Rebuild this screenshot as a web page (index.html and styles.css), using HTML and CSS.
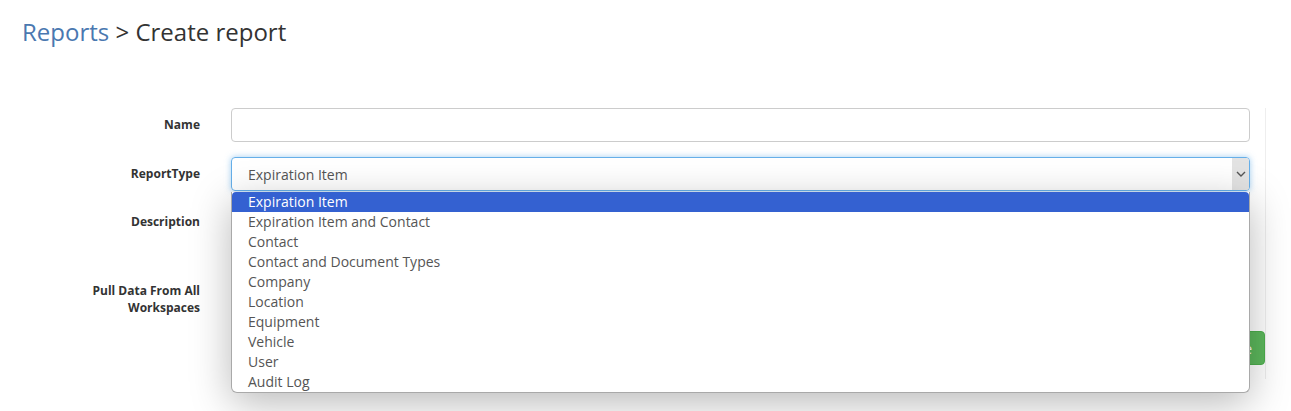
FILE: index.html
```html
<!DOCTYPE html>
<html lang="en">
<head>
    <meta charset="UTF-8">
    <meta name="viewport" content="width=device-width, initial-scale=1.0">
    <title>Create report</title>
    <link rel="stylesheet" href="styles.css">
</head>
<body>
    <h1 class="page-title"><a href="#" class="crumb">Reports</a> &gt; Create report</h1>

    <div class="form-wrap">
        <div class="form-row">
            <label class="control-label" for="name">Name</label>
            <input type="text" id="name" class="form-control">
        </div>

        <div class="form-row">
            <label class="control-label">ReportType</label>
            <div class="select-wrap">
                <div class="fake-select">
                    <span>Expiration Item</span>
                    <span class="arrow">
                        <svg width="10" height="6" viewBox="0 0 10 6"><path d="M1 1l4 4 4-4" fill="none" stroke="#555" stroke-width="1.4"/></svg>
                    </span>
                </div>
                <ul class="options">
                    <li class="selected">Expiration Item</li>
                    <li>Expiration Item and Contact</li>
                    <li>Contact</li>
                    <li>Contact and Document Types</li>
                    <li>Company</li>
                    <li>Location</li>
                    <li>Equipment</li>
                    <li>Vehicle</li>
                    <li>User</li>
                    <li>Audit Log</li>
                </ul>
            </div>
        </div>

        <div class="form-row">
            <label class="control-label desc-label" for="desc">Description</label>
            <textarea id="desc" class="form-control area"></textarea>
        </div>

        <div class="form-row">
            <label class="control-label">Pull Data From All<br>Workspaces</label>
            <div class="check-cell"><input type="checkbox" class="check"></div>
        </div>

        <div class="actions">
            <button class="btn-save">Save</button>
        </div>
    </div>
</body>
</html>
```

FILE: styles.css
```css
html, body {
    min-height: 411px;
}
body {
    margin: 0;
    font-family: 'Open Sans', sans-serif;
    color: #333;
    background-color: #fff;
}
.page-title {
    font-size: 24px;
    font-weight: normal;
    line-height: 33px;
    margin: 0;
    padding: 15px 0 0 22px;
}
.crumb {
    color: #4a78b0;
    text-decoration: none;
}
.form-wrap {
    width: 1265px;
    margin-top: 60px;
    border-right: 1px solid #eee;
    padding-bottom: 14px;
}
.form-row {
    display: grid;
    grid-template-columns: 200px 1fr;
    column-gap: 31px;
    margin: 0 15px 15px 0;
}
.control-label {
    font-size: 12px;
    font-weight: bold;
    line-height: 17px;
    text-align: right;
    padding-top: 8px;
}
.desc-label {
    padding-top: 7px;
}
.form-control {
    height: 34px;
    box-sizing: border-box;
    border: 1px solid #ccc;
    border-radius: 4px;
    font-family: 'Open Sans', sans-serif;
    font-size: 14px;
    margin: 0;
}
.area {
    height: 53px;
    resize: none;
}
.select-wrap {
    position: relative;
}
.fake-select {
    height: 34px;
    box-sizing: border-box;
    border: 1px solid #66afe9;
    border-radius: 4px;
    box-shadow: 0 0 6px rgba(102, 175, 233, 0.6);
    display: flex;
    align-items: center;
    justify-content: space-between;
    padding-left: 16px;
    font-size: 14px;
    color: #555;
    overflow: hidden;
}
.arrow {
    width: 17px;
    height: 100%;
    background-color: #e3e3e3;
    display: flex;
    align-items: center;
    justify-content: center;
}
.options {
    position: absolute;
    top: 35px;
    left: 0;
    right: 0;
    margin: 0;
    padding: 0;
    list-style: none;
    background-color: #fff;
    border: 1px solid #a9a9a9;
    border-top: none;
    border-radius: 0 0 6px 6px;
    box-shadow: 0 10px 40px rgba(0, 0, 0, 0.28);
    z-index: 10;
}
.options li {
    font-size: 14px;
    line-height: 20px;
    color: #555;
    padding-left: 16px;
}
.options li.selected {
    background-color: #3461d1;
    color: #fff;
    border-radius: 4px 4px 0 0;
}
.check-cell {
    padding-top: 12px;
}
.check {
    margin: 0;
    width: 13px;
    height: 13px;
}
.actions {
    display: flex;
    justify-content: flex-end;
    margin-top: 15px;
}
.btn-save {
    background-color: #5cb85c;
    color: #fff;
    border: 1px solid #4cae4c;
    border-radius: 4px;
    font-family: 'Open Sans', sans-serif;
    font-size: 14px;
    height: 34px;
    padding: 0 12px;
}
```
